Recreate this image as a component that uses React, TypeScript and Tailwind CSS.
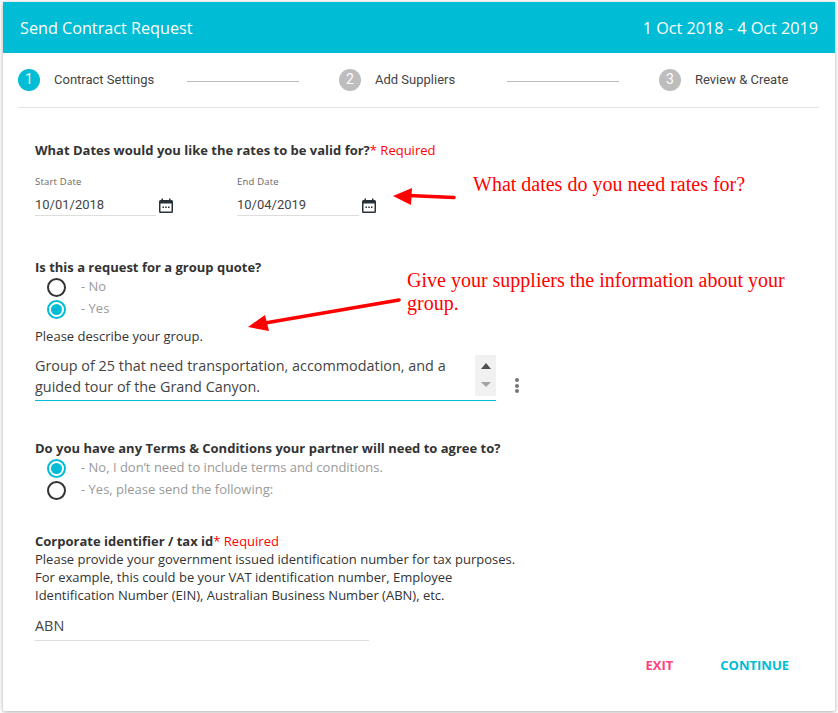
const steps = [
  { n: 1, label: "Contract Settings", active: true },
  { n: 2, label: "Add Suppliers", active: false },
  { n: 3, label: "Review & Create", active: false },
];

function CalendarIcon() {
  return (
    <svg width="16" height="16" viewBox="0 0 16 16" className="shrink-0">
      <path
        d="M3.500 0.500h1.500v1.500h6V0.500h1.500v1.500h1A1.500 1.500 0 0 1 15 3.500v10a1.500 1.500 0 0 1-1.500 1.500h-11A1.500 1.500 0 0 1 1 13.500v-10A1.500 1.500 0 0 1 2.500 2h1z"
        fill="#263238"
      />
      <rect x="2.500" y="5.500" width="11" height="8" fill="#fff" />
      <rect x="4.500" y="8.500" width="1.500" height="1.500" fill="#263238" />
      <rect x="7.250" y="8.500" width="1.500" height="1.500" fill="#263238" />
      <rect x="10" y="8.500" width="1.500" height="1.500" fill="#263238" />
    </svg>
  );
}

function Radio({ checked, label }: { checked?: boolean; label: string }) {
  return (
    <div className="flex h-[22px] items-center pl-[11.500px]">
      {checked ? (
        <span className="flex h-[19px] w-[19px] items-center justify-center rounded-full border-2 border-[#00bcd4]">
          <span className="h-[11px] w-[11px] rounded-full bg-[#00bcd4]" />
        </span>
      ) : (
        <span className="h-[19px] w-[19px] rounded-full border-2 border-[#333]" />
      )}
      <span className="ml-[15.500px] text-[13px] text-[#9a9a9a]">- {label}</span>
    </div>
  );
}

function DateField({ label, value, width }: { label: string; value: string; width: string }) {
  return (
    <div>
      <div className="text-[9.500px] leading-[12px] tracking-[0.2px] text-[#666]">{label}</div>
      <div className="mt-[6px] flex items-center">
        <div className={`${width} h-[22px] border-b border-[#ddd] font-['Roboto',sans-serif] text-[13px] leading-[21px] text-[#444]`}>{value}</div>
        <div className="ml-[2px] mt-[1px]"><CalendarIcon /></div>
      </div>
    </div>
  );
}

export default function App() {
  return (
    <div className="h-[713px] w-[838px] overflow-hidden bg-white pl-[3px] pt-[2px] font-['Open_Sans',sans-serif]">
      <div className="relative h-[709px] w-[832px] rounded-[2px] bg-white shadow-[0_1px_4px_rgba(0,0,0,0.35)]">
        {/* Header */}
        <div className="flex h-[51px] items-center justify-between bg-[#00bcd4] px-[17px] pt-[1px] text-[16.200px] text-white">
          <span>Send Contract Request</span>
          <span>1 Oct 2018 - 4 Oct 2019</span>
        </div>

        {/* Stepper */}
        <div className="mx-[15px] flex h-[55px] w-[801px] items-center border-b border-[#e2e2e2] font-['Roboto',sans-serif]">
          {steps.map((s, i) => (
            <div key={s.n} className="flex items-center">
              <span className={`flex h-[22px] w-[22px] items-center justify-center rounded-full pb-[2px] text-[14px] text-white ${s.active ? "bg-[#00bcd4]" : "bg-[#bdbdbd]"}`}>
                {s.n}
              </span>
              <span className={`ml-[14px] text-[13px] text-[#444] ${i === 0 ? "w-[133px]" : i === 1 ? "w-[132px]" : ""}`}>{s.label}</span>
              {i < 2 && <span className="mr-[40px] mt-[3px] h-px w-[112px] bg-[#bdbdbd]" />}
            </div>
          ))}
        </div>

        {/* Form */}
        <div className="pl-[32px] text-[13px] text-[#333]">
          <div className="mt-[33px] leading-[18px]">
            <span className="font-bold">What Dates would you like the rates to be valid for?</span>
            <span className="text-[#f00]">* Required</span>
          </div>
          <div className="mt-[17px] flex gap-[63px]">
            <DateField label="Start Date" value="10/01/2018" width="w-[121px]" />
            <DateField label="End Date" value="10/04/2019" width="w-[122px]" />
          </div>

          <div className="mt-[42px] font-bold leading-[18px]">Is this a request for a group quote?</div>
          <div>
            <Radio label="No" />
            <Radio checked label="Yes" />
          </div>
          <div className="mt-[7px] leading-[18px]">Please describe your group.</div>
          <div className="mt-[10px] flex items-start">
            <div className="flex w-[461px] border-b border-b-[#00bcd4] pb-[3px]">
              <div className="flex-1 text-[14.400px] leading-[21px] text-[#444]">
                Group of 25 that need transportation, accommodation, and a guided tour of the Grand Canyon.
              </div>
              <div className="flex h-[41px] w-[21px] flex-col items-center justify-between bg-[#f1f1f1] pb-[9px] pt-[8px]">
                <span className="h-0 w-0 border-x-[5px] border-b-[6px] border-x-transparent border-b-[#505050]" />
                <span className="h-0 w-0 border-x-[5px] border-t-[5px] border-x-transparent border-t-[#a3a3a3]" />
              </div>
            </div>
            <div className="ml-[19px] mt-[23px] flex flex-col gap-[1.500px]">
              <span className="h-[4px] w-[4px] rounded-full bg-[#757575]" />
              <span className="h-[4px] w-[4px] rounded-full bg-[#757575]" />
              <span className="h-[4px] w-[4px] rounded-full bg-[#757575]" />
            </div>
          </div>

          <div className="mt-[38px] font-bold leading-[18px]">Do you have any Terms &amp; Conditions your partner will need to agree to?</div>
          <div>
            <Radio checked label="No, I don’t need to include terms and conditions." />
            <Radio label="Yes, please send the following:" />
          </div>

          <div className="mt-[31px] leading-[18px]">
            <span className="font-bold">Corporate identifier / tax id</span>
            <span className="text-[#f00]">* Required</span>
          </div>
          <div className="leading-[18px]">
            Please provide your government issued identification number for tax purposes.
            <br />
            For example, this could be your VAT identification number, Employee
            <br />
            Identification Number (EIN), Australian Business Number (ABN), etc.
          </div>
          <div className="mt-[11px] h-[26px] w-[334px] border-b border-[#ddd] text-[14.400px] leading-[21px] text-[#444]">ABN</div>
        </div>

        {/* Actions */}
        <div className="mt-[15px] flex justify-end pr-[46px] text-[13px] font-bold">
          <span className="text-[#ff4081]">EXIT</span>
          <span className="ml-[47px] text-[#00bcd4]">CONTINUE</span>
        </div>

        {/* Annotations drawn over the form */}
        <div className="absolute left-[470px] top-[170px] font-['Liberation_Serif',serif] text-[20px] leading-[24px] text-[#f00]">What dates do you need rates for?</div>
        <div className="absolute left-[404px] top-[267px] w-[400px] font-['Liberation_Serif',serif] text-[20px] leading-[23px] text-[#f00]">Give your suppliers the information about your group.</div>
        <svg className="absolute left-0 top-0" width="832" height="709" viewBox="0 0 832 709" fill="none">
          <path d="M451 195.500L405 193.500" stroke="#f00" strokeWidth="3.500" strokeLinecap="round" />
          <path d="M390 194L409 186L408 203Z" fill="#f00" />
          <path d="M396 298L262 321" stroke="#f00" strokeWidth="3.500" strokeLinecap="round" />
          <path d="M245 325L262 313L266 329Z" fill="#f00" />
        </svg>
      </div>
    </div>
  );
}
